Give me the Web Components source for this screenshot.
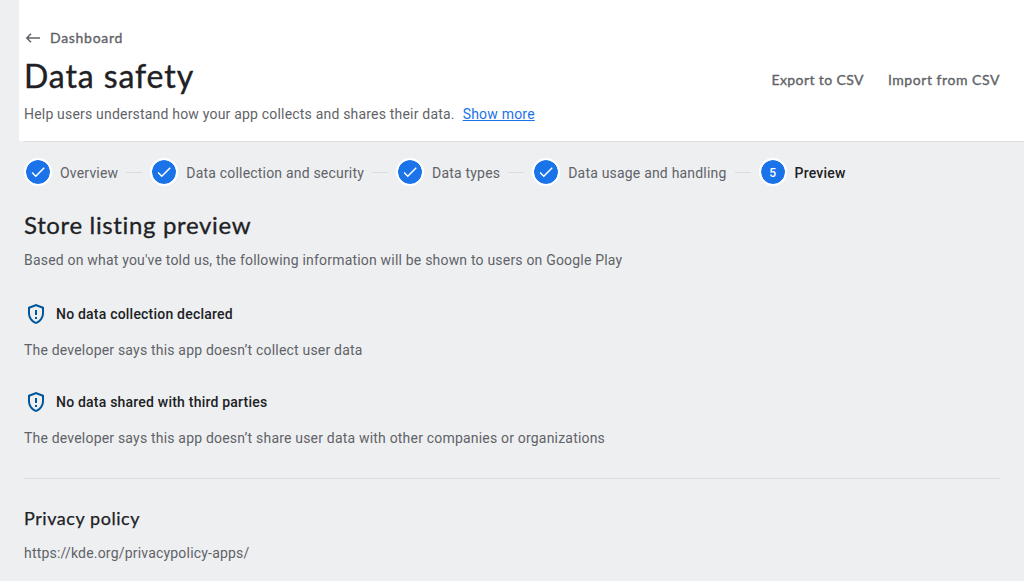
<!DOCTYPE html>
<html lang="en">
<head>
<meta charset="utf-8">
<title>Data safety</title>
<style>
  html, body { margin: 0; height: 100%; overflow: hidden; }
  body { background: #eeeff1; font: 400 14px/20px Roboto, "Liberation Sans", sans-serif; letter-spacing: 0.195px; color: #5f6368; }
</style>
</head>
<body>
<data-safety-page></data-safety-page>
<script>
const define = (name, html) => customElements.define(name, class extends HTMLElement {
  connectedCallback() {
    if (this.shadowRoot) return;
    const t = document.createElement('template');
    t.innerHTML = html;
    this.attachShadow({ mode: 'open' }).append(t.content.cloneNode(true));
  }
});

define('check-icon', `
<style>:host{display:block;width:18px;height:18px}svg{display:block}</style>
<svg width="18" height="18" viewBox="0 0 24 24" fill="#fff"><path d="M9 16.17 4.83 12l-1.42 1.41L9 19 21 7l-1.41-1.41z"/></svg>`);

define('back-icon', `
<style>:host{display:block;width:18px;height:18px}svg{display:block}</style>
<svg width="18" height="18" viewBox="0 0 18 18" fill="none" stroke="#5f6368" stroke-width="1.5"><path d="M16 9H3M7 4.7 2.8 9 7 13.3"/></svg>`);

define('shield-icon', `
<style>:host{display:block;width:24px;height:24px}svg{display:block}</style>
<svg width="24" height="24" viewBox="0 0 24 24" fill="#01579b"><path d="M12 2 4 5v6.09c0 5.05 3.41 9.76 8 10.91 4.59-1.150 8-5.860 8-10.910V5l-8-3zm6 9.090c0 4-2.550 7.700-6 8.830-3.450-1.130-6-4.820-6-8.830v-4.700l6-2.250 6 2.250v4.700zM11 8h2v5h-2zM11 15h2v2h-2z"/></svg>`);

define('top-button', `
<style>:host{display:block;font:400 14px/20px Lato,sans-serif;letter-spacing:var(--tracking,.7px);color:#5f6368;white-space:nowrap;-webkit-text-stroke:.35px #5f6368}</style>
<slot></slot>`);

define('page-header', `
<style>
:host{display:block;box-sizing:border-box;height:142px;margin-left:19px;padding:28px 24px 0 5px;background:linear-gradient(90deg,#eeeff1 5px,#dadce0 5px) bottom/100% 1px no-repeat,#fff}
.back{display:flex;align-items:center;gap:8px;height:20px}
.row{display:flex;align-items:center;height:56px}
h1{margin:0;flex:1;font:400 32px/44px Lato,sans-serif;letter-spacing:.9px;color:#202124;-webkit-text-stroke:.4px #202124}
.actions{display:flex;gap:24px;padding-top:8px}
.desc{display:flex;gap:8px}
</style>
<div class="back"><back-icon></back-icon><slot name="back"></slot></div>
<div class="row"><h1><slot name="title"></slot></h1><div class="actions"><slot name="actions"></slot></div></div>
<div class="desc"><slot></slot></div>`);

define('text-link', `
<style>:host{display:block}a{color:#1a73e8;text-decoration:underline}</style>
<a><slot></slot></a>`);

define('wizard-step', `
<style>
:host{display:flex;align-items:center;gap:8px;white-space:nowrap}
:host([current]){color:#202124;font-weight:500}
.dot{box-sizing:border-box;width:28px;height:28px;border:2px solid #fff;border-radius:50%;background:#1a73e8 padding-box;display:grid;place-items:center;color:#fff;font-size:12px;font-weight:500;letter-spacing:0}
check-icon{width:18px;height:18px;margin-bottom:1px}
::slotted([slot=mark]){padding-top:1px}
.label{padding-top:2px}
</style>
<div class="dot"><slot name="mark"><check-icon></check-icon></slot></div><span class="label"><slot></slot></span>`);

define('step-bar', `
<style>:host{display:flex;gap:8px;align-items:center;height:28px}::slotted(hr){width:16px;height:1px;border:0;margin:0;background:#dadce0}</style>
<slot></slot>`);

define('preview-note', `
<style>
:host{display:block;height:88px}
.head{display:flex;align-items:center;gap:8px;height:24px;color:#202124;font-weight:500;letter-spacing:.21px}
p{margin:14px 0 0}
</style>
<div class="head"><shield-icon></shield-icon><slot name="title"></slot></div><p><slot></slot></p>`);

define('section-title', `
<style>:host{display:block;font:400 24px/32px Lato,sans-serif;letter-spacing:.65px;color:#202124;-webkit-text-stroke:.3px #202124}
:host([small]){font-size:18px;line-height:24px;letter-spacing:.55px;-webkit-text-stroke:.25px #202124}</style>
<slot></slot>`);

define('data-safety-page', `
<style>
:host{display:block;height:581px;overflow:hidden}
main{padding:16px 24px 0}
section-title{margin-top:23px}
.intro{margin:9px 0 32px}
.rule{height:1px;background:#dadce0}
section-title[small]{margin-top:27px}
.url{margin-top:13px}
p{margin:0}
</style>
<page-header>
  <top-button slot="back">Dashboard</top-button>
  <span slot="title">Data safety</span>
  <top-button slot="actions" style="--tracking:.4px">Export to CSV</top-button>
  <top-button slot="actions" style="--tracking:.55px">Import from CSV</top-button>
  <span>Help users understand how your app collects and shares their data.</span><text-link>Show more</text-link>
</page-header>
<main>
  <step-bar>
    <wizard-step>Overview</wizard-step><hr>
    <wizard-step>Data collection and security</wizard-step><hr>
    <wizard-step>Data types</wizard-step><hr>
    <wizard-step>Data usage and handling</wizard-step><hr>
    <wizard-step current><span slot="mark">5</span>Preview</wizard-step>
  </step-bar>
  <section-title>Store listing preview</section-title>
  <p class="intro">Based on what you've told us, the following information will be shown to users on Google Play</p>
  <preview-note><span slot="title">No data collection declared</span>The developer says this app doesn’t collect user data</preview-note>
  <preview-note><span slot="title">No data shared with third parties</span>The developer says this app doesn’t share user data with other companies or organizations</preview-note>
  <div class="rule"></div>
  <section-title small>Privacy policy</section-title>
  <p class="url">https://kde.org/privacypolicy-apps/</p>
</main>`);
</script>
</body>
</html>
